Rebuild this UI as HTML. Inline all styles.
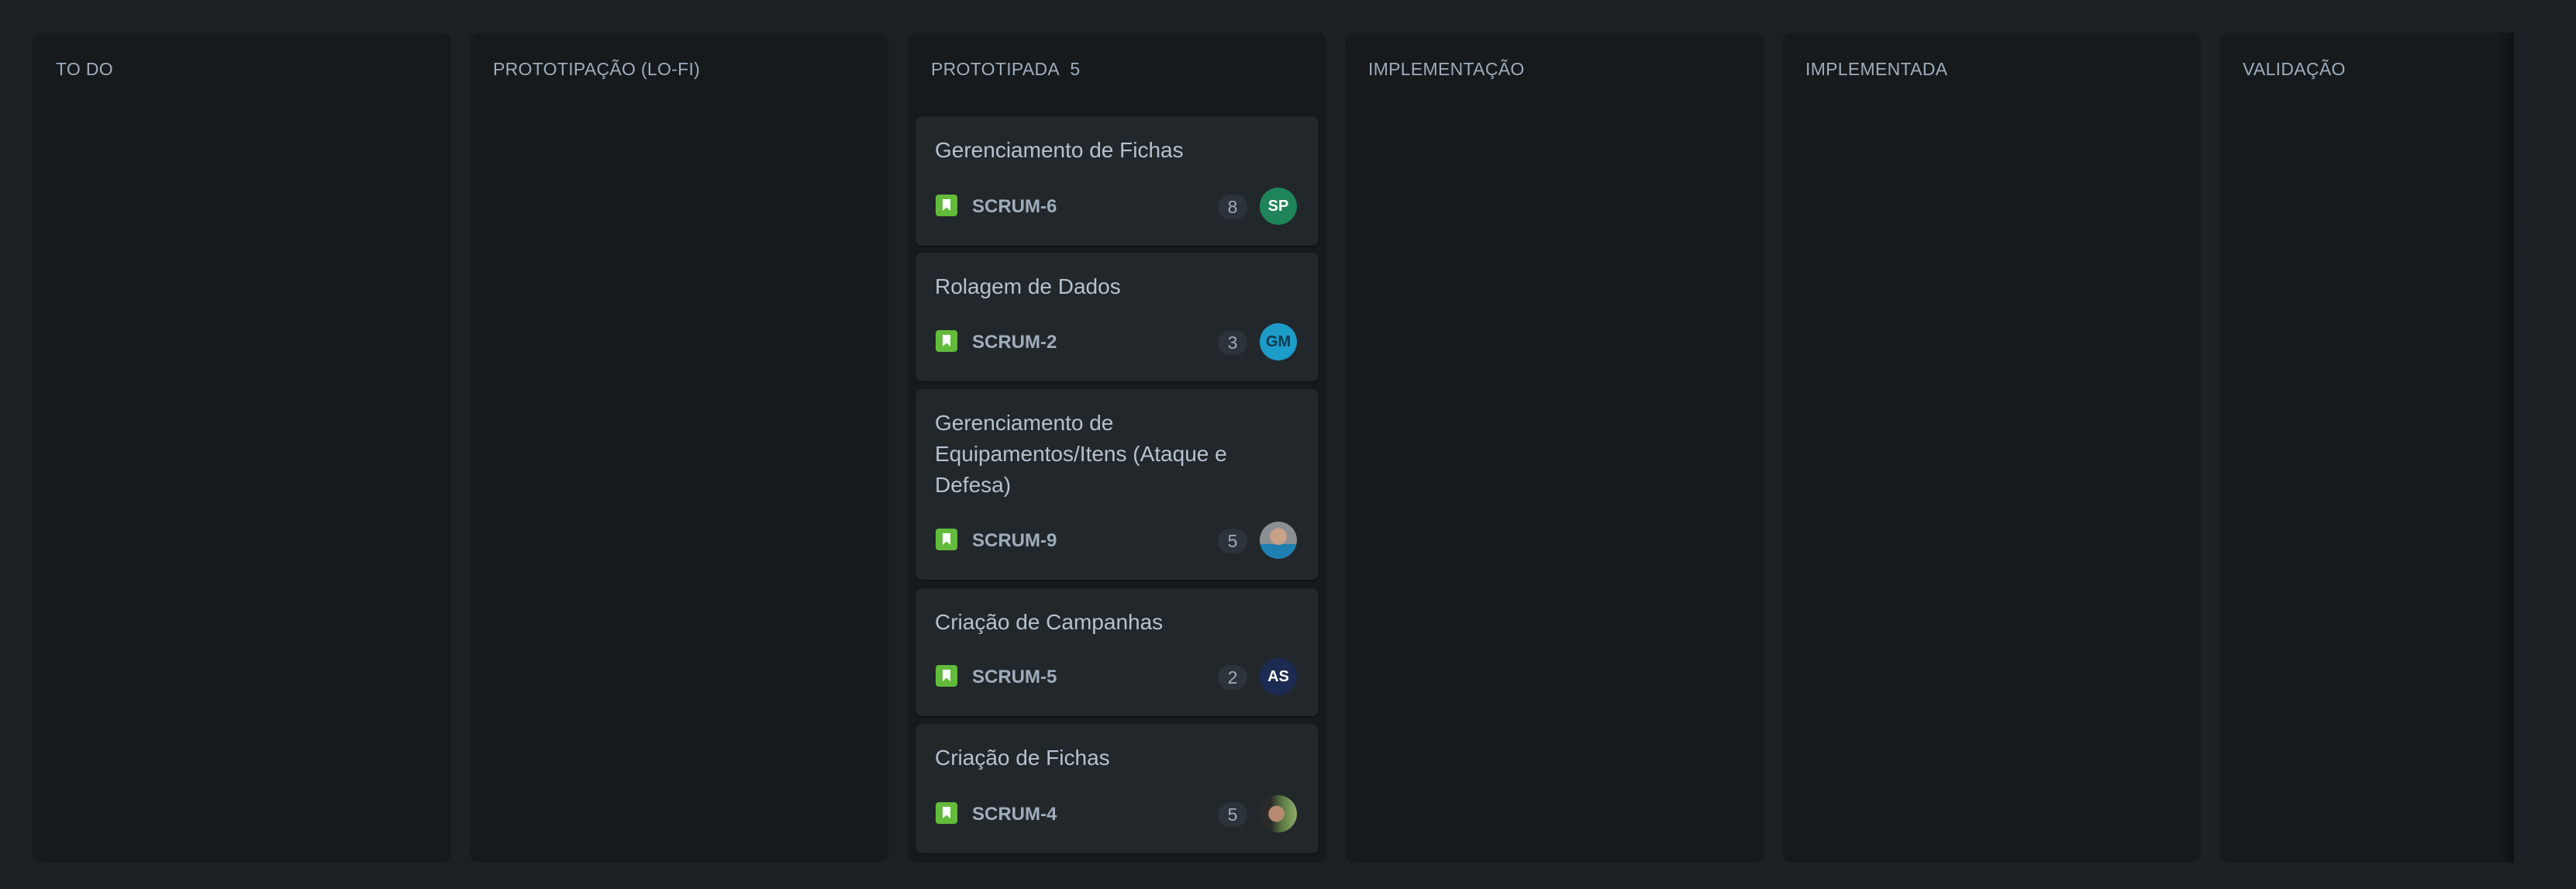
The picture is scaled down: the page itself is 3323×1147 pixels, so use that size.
<!DOCTYPE html>
<html><head><meta charset="utf-8"><style>
*{box-sizing:border-box;margin:0;padding:0}
body{width:3323px;height:1147px;background:#1d2025;font-family:"Liberation Sans",sans-serif;position:relative;overflow:hidden}
.col{position:absolute;top:42px;height:1071px;width:540px;background:#161a1d;border-radius:12px}
.col h2{position:absolute;left:30px;top:34px;font-size:23px;font-weight:normal;color:#9fadbc;letter-spacing:0.3px}
.card{position:absolute;left:10px;width:520px;background:#22272b;border-radius:8px;box-shadow:0 1px 2px rgba(0,0,0,.5)}
.card .t{position:absolute;left:25px;top:24px;width:440px;font-size:28px;line-height:40px;color:#b6c2cf}
.row{position:absolute;left:26px;right:28px;bottom:27px;height:48px}
.ic{position:absolute;left:0;top:9px;width:28px;height:28px;background:#63ba3c;border-radius:4px}
.ic:after{content:"";position:absolute;left:9px;top:6px;width:10px;height:15px;background:#fff;clip-path:polygon(0 0,100% 0,100% 100%,50% 70%,0 100%)}
.key{position:absolute;left:47px;top:11px;font-size:24px;font-weight:bold;color:#9fadbc}
.b{position:absolute;right:64px;top:9px;width:38px;height:32px;border-radius:16px;background:#2c333a;color:#9fadbc;font-size:23px;text-align:center;line-height:32px}
.av{position:absolute;right:0;top:0;width:48px;height:48px;border-radius:50%;color:#fff;font-size:20px;font-weight:bold;text-align:center;line-height:48px}
</style></head><body>
<div class="col" style="left:42px"><h2>TO DO</h2></div>
<div class="col" style="left:606px"><h2>PROTOTIPAÇÃO (LO-FI)</h2></div>
<div class="col" style="left:1171px"><h2>PROTOTIPADA&nbsp; 5</h2>
<div class="card" style="top:108px;height:167px"><div class="t">Gerenciamento de Fichas</div><div class="row"><div class="ic"></div><div class="key">SCRUM-6</div><div class="b">8</div><div class="av" style="background:#1f845a">SP</div></div></div>
<div class="card" style="top:284px;height:166px"><div class="t">Rolagem de Dados</div><div class="row"><div class="ic"></div><div class="key">SCRUM-2</div><div class="b">3</div><div class="av" style="background:#1d9bc9;color:#0c3a4f">GM</div></div></div>
<div class="card" style="top:460px;height:246px"><div class="t">Gerenciamento de Equipamentos/Itens (Ataque e Defesa)</div><div class="row"><div class="ic"></div><div class="key">SCRUM-9</div><div class="b">5</div><div class="av" style="background:radial-gradient(circle at 50% 40%,#c9a08a 0 28%,transparent 30%),linear-gradient(#8a8f94 0 60%,#1f7fb0 60%)"></div></div></div>
<div class="card" style="top:717px;height:165px"><div class="t">Criação de Campanhas</div><div class="row"><div class="ic"></div><div class="key">SCRUM-5</div><div class="b">2</div><div class="av" style="background:#1c2b52">AS</div></div></div>
<div class="card" style="top:892px;height:167px"><div class="t">Criação de Fichas</div><div class="row"><div class="ic"></div><div class="key">SCRUM-4</div><div class="b">5</div><div class="av" style="background:radial-gradient(circle at 45% 50%,#b88a72 0 28%,transparent 30%),linear-gradient(90deg,#2a2a2a 0 30%,#5b7a45 60%,#8fae6a)"></div></div></div>
</div>
<div class="col" style="left:1735px"><h2>IMPLEMENTAÇÃO</h2></div>
<div class="col" style="left:2299px"><h2>IMPLEMENTADA</h2></div>
<div class="col" style="left:2863px;width:380px;border-radius:12px 0 0 12px;background:linear-gradient(90deg,#161a1d 0,#161a1d 360px,#0f1214 380px)"><h2>VALIDAÇÃO</h2></div>
</body></html>
